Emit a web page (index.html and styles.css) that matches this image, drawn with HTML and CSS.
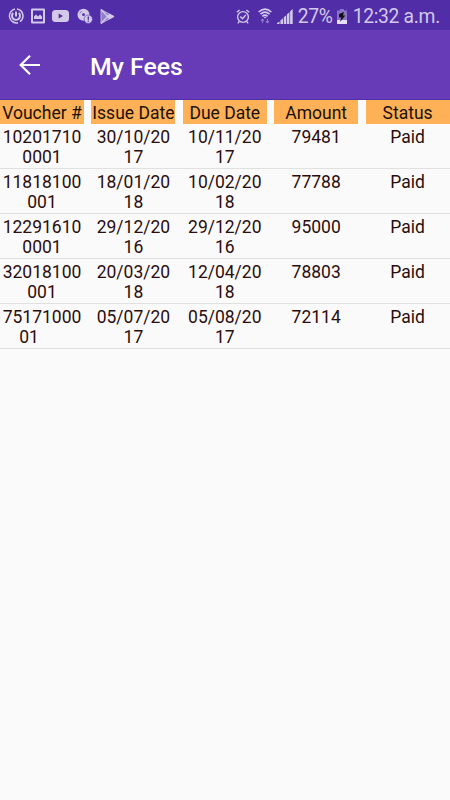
FILE: index.html
```html
<!DOCTYPE html>
<html lang="en">
<head>
    <meta charset="UTF-8">
    <meta name="viewport" content="width=device-width, initial-scale=1.0">
    <title>My Fees</title>
    <link rel="stylesheet" href="styles.css">
</head>
<body>

<div class="status-bar">
    <div class="notifications">
        <svg width="16" height="16" viewBox="0 0 16 16" fill="none" stroke="currentColor">
            <path d="M7 1A7 7 0 1 0 10 14.7M9 1A7 7 0 0 1 12 13.6" stroke-width="1.5"/>
            <path d="M5.2 5A4 4 0 1 0 10.8 5M8 3.5V8.5" stroke-width="2"/>
        </svg>
        <svg width="14" height="16" viewBox="0 0 14 16" fill="currentColor">
            <path fill-rule="evenodd" d="M1 .5H13Q14 .5 14 1.5V14.5Q14 15.5 13 15.5H1Q0 15.5 0 14.5V1.5Q0 .5 1 .5ZM2 2.5V13.5H12V2.5Z"/>
            <path d="M3 11V8.5L5 6.5L7 8.5L9 6.5L11 8.5V11Z"/>
        </svg>
        <svg width="17" height="12" viewBox="0 0 17 12">
            <rect width="17" height="12" rx="3.5" fill="currentColor"/>
            <path d="M6.7 3.5V8.5L11 6Z" fill="#512da8"/>
        </svg>
        <svg width="16" height="16" viewBox="0 0 16 16">
            <circle cx="6.5" cy="6.7" r="6" fill="currentColor"/>
            <circle cx="6.5" cy="6.7" r="1.4" fill="#512da8"/>
            <path d="M2.8 5.5A4 4 0 0 1 5.2 3.1" fill="none" stroke="#512da8" stroke-width=".5"/>
            <circle cx="11.3" cy="11.2" r="4.2" fill="currentColor" stroke="#512da8" stroke-width=".6"/>
            <path d="M11.3 8.6V11.8M11.3 12.6V13.8" stroke="#512da8" stroke-width="1.3"/>
        </svg>
        <svg width="15" height="15" viewBox="0 0 15 15">
            <path d="M1 .5L14 7.5L1 14.5Z" fill="currentColor" fill-opacity=".5" stroke="currentColor" stroke-width=".8" stroke-linejoin="round"/>
            <path d="M1 .5L10 10M1 14.5L10 5" stroke="currentColor" stroke-width="1.4"/>
            <path d="M10 5L14.5 7.5L10 10L7.6 7.5Z" fill="currentColor"/>
        </svg>
    </div>
    <div class="system">
        <svg class="alarm" width="14" height="15" viewBox="0 0 14 15" fill="none" stroke="currentColor" stroke-width="1.4">
            <circle cx="7" cy="8" r="5.4"/>
            <path d="M.8 3.3L3.6 1M13.2 3.3L10.4 1M4.3 7.5L6.5 9.7L9.8 6M3.3 12.5L1.8 14.4M10.7 12.5L12.2 14.4"/>
        </svg>
        <svg class="wifi" width="14" height="16" viewBox="0 0 14 16" fill="none" stroke="currentColor" stroke-width="1.6">
            <path d="M.6 4Q7-1.8 13.4 4M2.5 6.2Q7 2 11.5 6.2M4.4 8.3Q7 5.9 9.6 8.3"/>
            <path d="M5.3 8.7H8.7L7 10.6Z" fill="currentColor" stroke="none"/>
            <path d="M4.5 15V11.2M3 12.6L4.5 11.2L6 12.6M9.5 11V14.8M8 13.4L9.5 14.8L11 13.4" stroke-width="1.2" opacity=".5"/>
        </svg>
        <svg class="signal" width="16" height="15" viewBox="0 0 16 15" fill="currentColor">
            <path d="M0 15V14L2.5 12.5V15ZM3.4 15V11.5L6 9.3V15ZM6.8 15V8.3L9.3 6.2V15ZM10 15V5.3L12.4 3.3V15ZM13.1 15V2.2L15.7 0V15Z"/>
        </svg>
        <span class="percent">27%</span>
        <svg class="battery" width="10" height="15" viewBox="0 0 10 15">
            <path d="M3 0H7V1.5H10V15H0V1.5H3Z" fill="#8b73c5"/>
            <path d="M0 11H10V15H0Z" fill="#e6e0f4"/>
            <path d="M7 3L2 5V8.6H4.3L3 13L8.3 6.5H6Z" fill="#111"/>
        </svg>
        <span class="clock">12:32 a.m.</span>
    </div>
</div>

<div class="app-bar">
    <svg class="back" width="22" height="20" viewBox="0 0 22 20" fill="none" stroke="#fff" stroke-width="2.2">
        <path d="M11 .8L1.7 10L11 19.2M1.7 10H21"/>
    </svg>
    <h1>My Fees</h1>
</div>

<div class="fees">
    <div class="row header">
        <div>Voucher #</div>
        <div>Issue Date</div>
        <div>Due Date</div>
        <div>Amount</div>
        <div>Status</div>
    </div>
    <div class="row">
        <div>102017100001</div>
        <div>30/10/2017</div>
        <div>10/11/2017</div>
        <div>79481</div>
        <div>Paid</div>
    </div>
    <div class="row">
        <div>11818100001</div>
        <div>18/01/2018</div>
        <div>10/02/2018</div>
        <div>77788</div>
        <div>Paid</div>
    </div>
    <div class="row">
        <div>122916100001</div>
        <div>29/12/2016</div>
        <div>29/12/2016</div>
        <div>95000</div>
        <div>Paid</div>
    </div>
    <div class="row">
        <div>32018100001</div>
        <div>20/03/2018</div>
        <div>12/04/2018</div>
        <div>78803</div>
        <div>Paid</div>
    </div>
    <div class="row">
        <div>7517100001&nbsp;&nbsp;&nbsp;&nbsp;&nbsp;&nbsp;</div>
        <div>05/07/2017</div>
        <div>05/08/2017</div>
        <div>72114</div>
        <div>Paid</div>
    </div>
</div>

</body>
</html>
```
FILE: styles.css
```css
body {
    margin: 0;
    min-height: 100vh;
    background-color: #fafafa;
    font-family: Roboto, sans-serif;
    color: #2b0d0d;
}

.status-bar {
    display: flex;
    justify-content: space-between;
    height: 30px;
    padding: 0 10px 0 8px;
    box-sizing: border-box;
    background-color: #512da8;
    color: #d3caea;
}

.notifications,
.system {
    display: flex;
    align-items: center;
    height: 32px;
}

.notifications {
    gap: 7.2px;
}

.alarm {
    margin-right: 8px;
}

.wifi {
    margin-right: 5px;
}

.signal {
    margin-right: 5px;
}

.percent,
.clock {
    font-size: 19.3px;
    line-height: 32px;
    letter-spacing: -0.3px;
    padding-top: 1px;
    white-space: nowrap;
}

.battery {
    margin: 0 6px 0 4px;
}

.app-bar {
    display: flex;
    align-items: center;
    height: 70px;
    padding-left: 19px;
    box-sizing: border-box;
    background-color: #673ab7;
    border-bottom: 1px solid #512da8;
}

.app-bar h1 {
    margin: 4px 0 0 49px;
    font-size: 24.8px;
    font-weight: 500;
    color: #fff;
}

.row {
    display: grid;
    grid-template-columns: repeat(5, 84px);
    column-gap: 7.4px;
    height: 45px;
    box-sizing: border-box;
    border-bottom: 1px solid #e0e0e0;
    padding-top: 3px;
    font-size: 17.5px;
    line-height: 20px;
    text-align: center;
    word-break: break-all;
}

.row div {
    padding: 0 1px;
}

.header {
    grid-template-rows: 24px;
    height: 24px;
    padding: 0;
    border: none;
    line-height: 26px;
    color: #1a1005;
    white-space: nowrap;
}

.header div {
    padding: 0;
    background-color: #ffb157;
}
```
